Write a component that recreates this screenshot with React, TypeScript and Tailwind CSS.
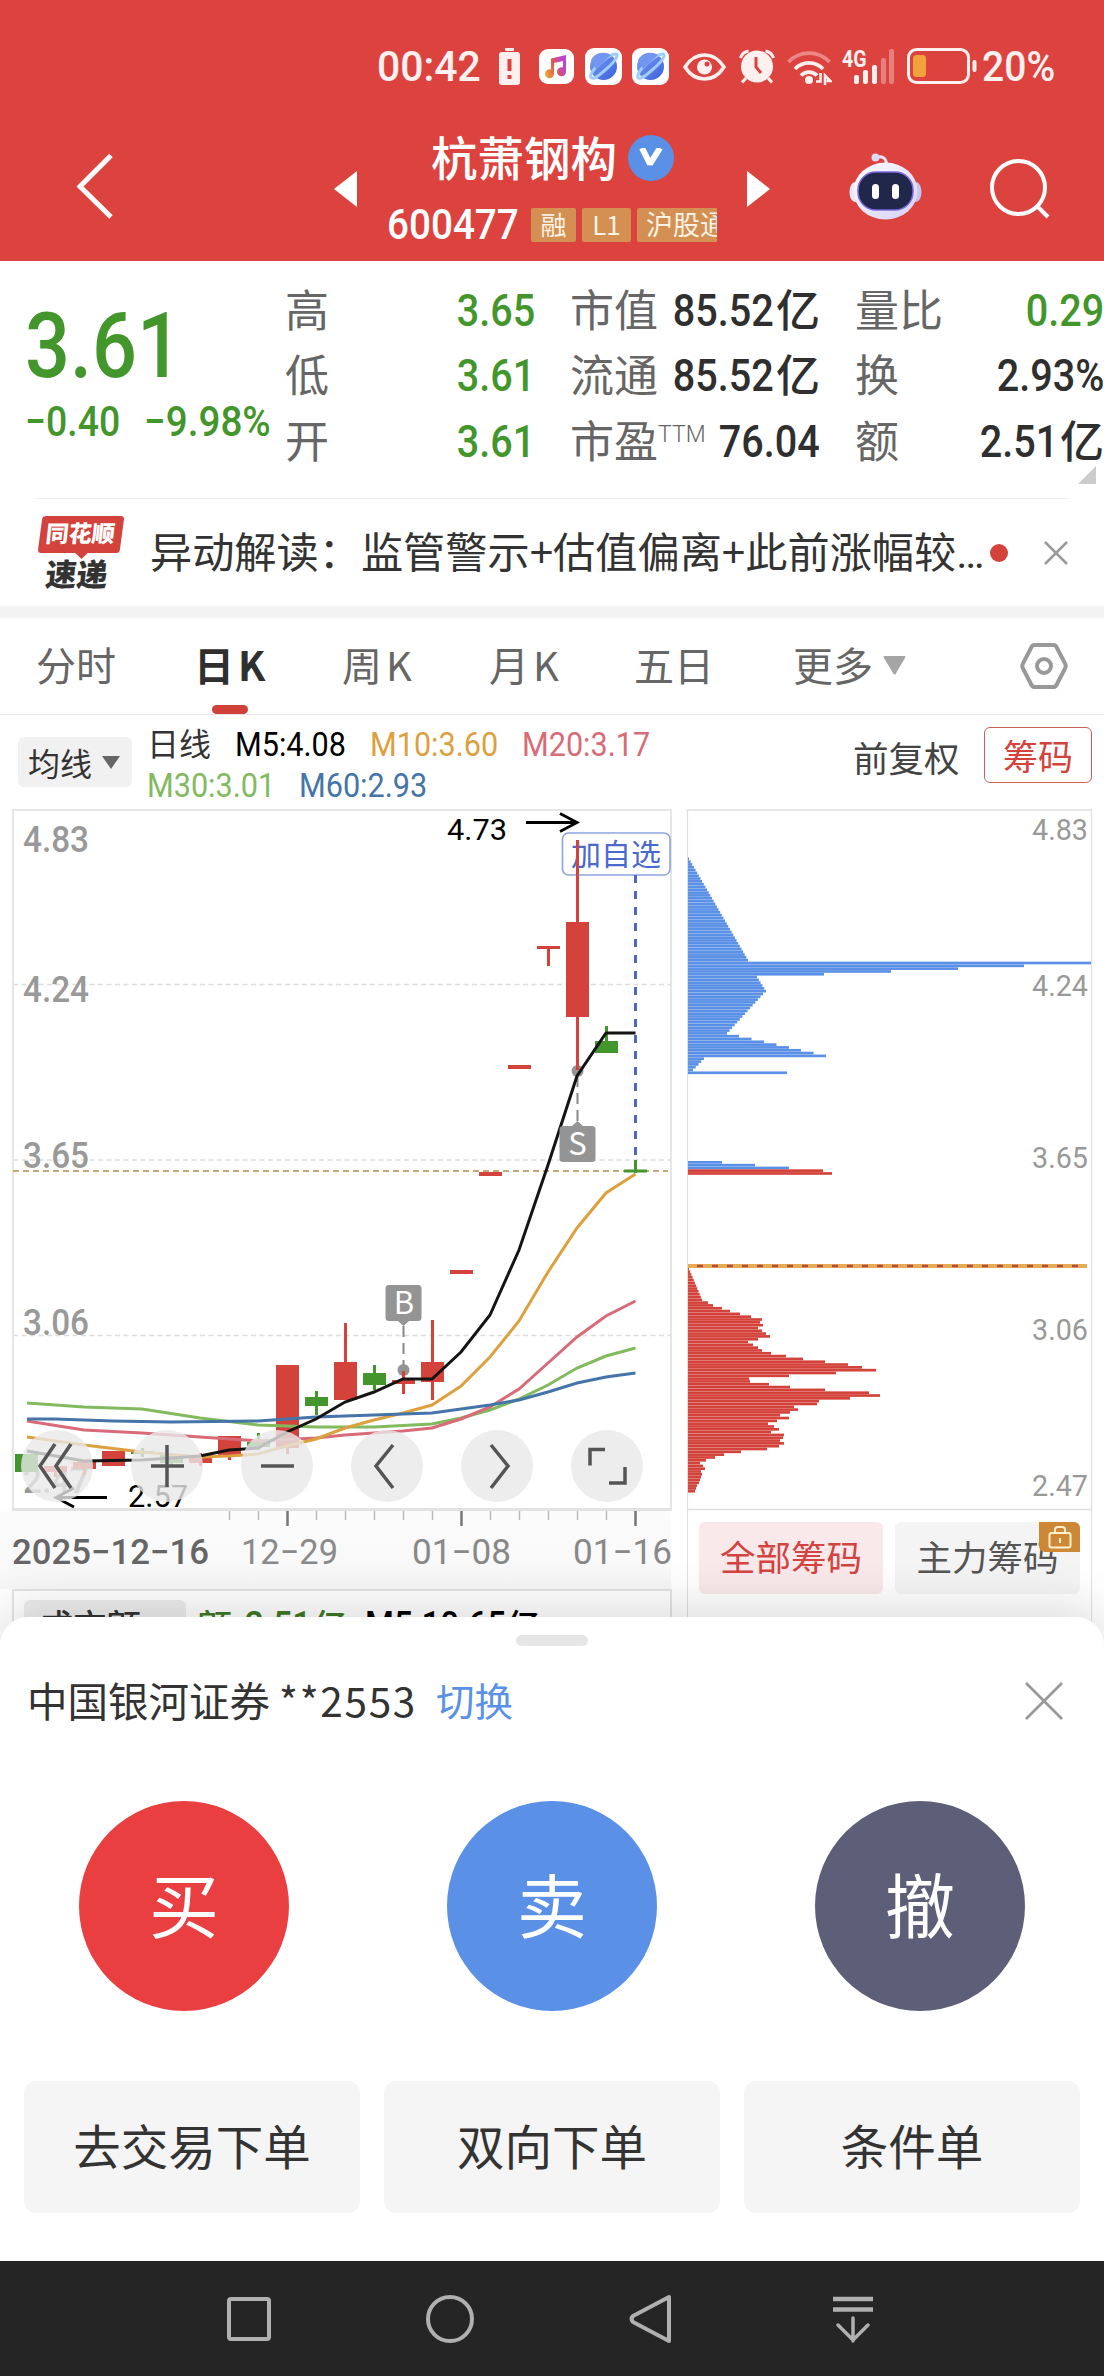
import type { ReactNode } from 'react';

type Candle = { x: number; high: number; low: number; top: number; bottom: number; up: boolean };

const RED = '#d4433b';
const GREEN = '#43962b';
const BLUE = '#5a90e6';

const candles: Candle[] = [
  { x: 26.5, high: 1454, low: 1472, top: 1454, bottom: 1472, up: false },
  { x: 55.5, high: 1466, low: 1477, top: 1466, bottom: 1472, up: true },
  { x: 84.5, high: 1461, low: 1475, top: 1462, bottom: 1469, up: true },
  { x: 113.5, high: 1451, low: 1466, top: 1451, bottom: 1466, up: true },
  { x: 142.5, high: 1448, low: 1457, top: 1451, bottom: 1454, up: false },
  { x: 171.5, high: 1453, low: 1466, top: 1455, bottom: 1463, up: false },
  { x: 200.5, high: 1453, low: 1466, top: 1455, bottom: 1463, up: true },
  { x: 229.5, high: 1436, low: 1460, top: 1436, bottom: 1455, up: true },
  { x: 258.5, high: 1433, low: 1450, top: 1442, bottom: 1447, up: false },
  { x: 287.5, high: 1365, low: 1454, top: 1365, bottom: 1448, up: true },
  { x: 316.5, high: 1391, low: 1415, top: 1397, bottom: 1406, up: false },
  { x: 345.5, high: 1323, low: 1400, top: 1362, bottom: 1400, up: true },
  { x: 374.5, high: 1365, low: 1390, top: 1373, bottom: 1385, up: false },
  { x: 403.5, high: 1371, low: 1394, top: 1380, bottom: 1384, up: true },
  { x: 432.5, high: 1320, low: 1400, top: 1362, bottom: 1382, up: true },
  { x: 461.5, high: 1270, low: 1274, top: 1270, bottom: 1274, up: true },
  { x: 490.5, high: 1172, low: 1176, top: 1172, bottom: 1176, up: true },
  { x: 519.5, high: 1065, low: 1069, top: 1065, bottom: 1069, up: true },
  { x: 548.5, high: 946, low: 966, top: 946, bottom: 949, up: true },
  { x: 577.5, high: 840, low: 1070, top: 922, bottom: 1017, up: true },
  { x: 606.5, high: 1026, low: 1053, top: 1041, bottom: 1053, up: false },
  { x: 635.5, high: 1160, low: 1173, top: 1169.5, bottom: 1172.5, up: false }
];

const averages = [
  {
    color: '#82ba5e',
    points:
      '27,1403 84,1407 142,1409 200,1418 258,1425 316,1427 374,1427 432,1424 461,1418 490,1410 519,1399 548,1385 577,1368 606,1356 635.5,1348'
  },
  {
    color: '#d96b78',
    points:
      '27,1421 84,1430 142,1433 200,1437 258,1441 316,1438 345,1435 374,1433 403,1431 432,1428 461,1419 490,1407 519,1389 548,1363 577,1337 606,1316 635.5,1301'
  },
  {
    color: '#dda03f',
    points:
      '27,1437 84,1445 142,1452 200,1457 229,1456 258,1454 287,1446 316,1439 345,1428 374,1420 403,1413 432,1405 461,1386 490,1357 519,1321 548,1272 577,1228 606,1193 635.5,1174'
  },
  {
    color: '#4474a8',
    points:
      '27,1419 55,1419 113,1421 171,1422 258,1421 287,1419 316,1417 345,1416 374,1415 432,1413 461,1409 490,1405 519,1400 548,1392 577,1383 606,1377 635.5,1373'
  },
  {
    color: '#141414',
    points:
      '27,1451 84,1461 142,1460 200,1456 229,1450 258,1448 287,1432 316,1419 345,1402 374,1392 403,1379 432,1379 461,1352 490,1315 519,1250 548,1165 577,1076 606,1033 635.5,1033'
  }
];

const PITCH = 2.815;

// evenly spaced widths between two values
function ramp(from: number, to: number, count: number) {
  return Array.from({ length: count }, (_, i) => from + ((to - from) * i) / (count - 1));
}

const upperChips = [
  ...ramp(1, 60, 37),
  403, 336, 270, 203, 136,
  ...ramp(69, 78, 6),
  ...ramp(75, 39, 15),
  51, 63.5, 76, 88.5, 101, 113, 125.5, 138,
  ...ramp(16, 5, 5),
  99
];

const lowerChips = [
  ...ramp(1, 14, 12),
  20, 25, 34, 42, 52, 63, 74, 72, 75, 70, 74, 78, 82, 70, 60, 65, 70, 74, 83, 98, 115, 137, 160, 174, 188, 148,
  101, 61, 62, 81, 102, 137, 181, 192, 162, 131, 129, 106, 110, 102, 92, 101, 89, 80, 86, 91, 83, 96, 95, 92,
  96, 91, 79, 53, 36, 27, 18, 12, 15, 17, 13, 14, 13, 12, 11, 9, 8, 7
];

function Chips({ widths, top, color }: { widths: number[]; top: number; color: string }) {
  return (
    <g fill={color}>
      {widths.map((w, i) => (
        <rect key={i} x={688} y={top + i * PITCH} width={w} height={2.68} />
      ))}
    </g>
  );
}

// the digits are narrower than the font draws them
function Num({ className = '', children }: { className?: string; children: ReactNode }) {
  return (
    <span className={`inline-block whitespace-nowrap font-medium font-[Roboto,sans-serif] ${className}`}>
      {children}
    </span>
  );
}

function Planet({ id }: { id: string }) {
  return (
    <svg className="h-[37px] w-[37px]" viewBox="0 0 37 37">
      <defs>
        <linearGradient id={id} x1="0" y1="0" x2="1" y2="1">
          <stop offset="0" stopColor="#7fa0f2" />
          <stop offset="1" stopColor="#3a5fdd" />
        </linearGradient>
      </defs>
      <rect width="37" height="37" rx="9" fill="#fff" />
      <circle cx="18.500" cy="18.500" r="13.500" fill={`url(#${id})`} />
      <path d="M7 30C3 29 8 21 17 13.500S33 4 32 8c-.7 4-7 10-13 15S10 31 7 30Z" fill="none" stroke="#9fcdfa" strokeWidth="3" />
      <path d="M6 12A14 14 0 0 1 26 7L11 21Z" fill="#7397ef" />
    </svg>
  );
}

function StatusBar() {
  return (
    <div className="relative flex h-[132px] items-start pt-[46px] text-[#fdf0ef]">
      <Num className="ml-[377px] w-[120px] origin-left scale-x-[.975] text-[42px] leading-[42px]">00:42</Num>
      <svg className="ml-[2px] mt-0.5 h-[37px] w-[21px]" viewBox="0 0 21 37">
        <rect x="6" y="0" width="9" height="3" rx="1" fill="currentColor" />
        <rect y="4" width="21" height="33" rx="3" fill="currentColor" />
        <path d="M10.500 11v12M10.500 27v4" stroke="#dc433f" strokeWidth="4" />
      </svg>
      <svg className="ml-[19px] mt-[3px] h-[35px] w-[35px]" viewBox="0 0 35 35">
        <defs>
          <linearGradient id="note" x1="0" y1="1" x2="1" y2=".6">
            <stop offset="0" stopColor="#f0b435" />
            <stop offset=".55" stopColor="#e2574c" />
            <stop offset="1" stopColor="#b646d8" />
          </linearGradient>
        </defs>
        <rect width="35" height="35" rx="9" fill="#fff" />
        <path d="M12 9.500 27 6v16.500a4.500 4.500 0 1 1-3-4V12l-9 2v11a4.500 4.500 0 1 1-3-4.500Z" fill="url(#note)" />
      </svg>
      <div className="ml-[11px] mt-0.5 flex gap-2.5">
        <Planet id="planet-a" />
        <Planet id="planet-b" />
      </div>
      <svg className="ml-[14px] mt-[7px] h-[28px] w-[43px]" viewBox="0 0 43 28" fill="none" stroke="currentColor">
        <path d="M2 14C7 6 13 2 21.500 2S36 6 41 14C36 22 30 26 21.500 26S7 22 2 14Z" strokeWidth="3.500" />
        <circle cx="21.500" cy="14" r="7.500" fill="currentColor" stroke="none" />
        <circle cx="24" cy="11" r="2.500" fill="#dc433f" stroke="none" />
      </svg>
      <svg className="ml-[13px] mt-[3px] h-[35px] w-[36px]" viewBox="0 0 36 35" fill="none" stroke="currentColor" strokeWidth="3">
        <circle cx="18" cy="17.500" r="16" fill="currentColor" stroke="none" />
        <path d="M1.500 9a10 10 0 0 1 8-7M34.500 9a10 10 0 0 0-8-7M7 29l-4 4.500M29 29l4 4.500" />
        <path d="M17 8v10l5 6" stroke="#dc433f" strokeWidth="3" />
      </svg>
      <svg className="ml-[12px] mt-[3px] h-[36px] w-[45px]" viewBox="0 0 45 36" fill="none" stroke="currentColor" strokeWidth="3.800">
        <path d="M1.500 13a28 28 0 0 1 41 0" opacity=".4" />
        <path d="M8 20a19 19 0 0 1 28 0" />
        <path d="M14 26.500a11 11 0 0 1 16 0" />
        <circle cx="22" cy="31" r="4" fill="currentColor" stroke="none" />
        <path d="M29 32.500h4.500V24M38 36v-9.500l5.500 5.500h-4" strokeWidth="2.500" />
      </svg>
      <div className="relative ml-[10px] h-[40px] w-[54px]">
        <Num className="absolute left-0 top-0.5 origin-left scale-x-[.85] text-[23px] font-bold! leading-6">4G</Num>
        <svg className="absolute left-[12px] top-[3px] h-[35px] w-[41px]" viewBox="0 0 41 35" fill="currentColor">
          <rect x="0" y="26" width="5" height="9" rx="2" />
          <rect x="9" y="21" width="5" height="14" rx="2" />
          <rect x="18" y="16" width="5" height="19" rx="2" />
          <rect x="27" y="9" width="5" height="26" rx="2" opacity=".35" />
          <rect x="35" y="0" width="5" height="35" rx="2" opacity=".35" />
        </svg>
      </div>
      <svg className="ml-[11px] mt-0.5 h-[36px] w-[71px]" viewBox="0 0 71 36">
        <rect x="1.500" y="1.500" width="60" height="33" rx="8" fill="none" stroke="currentColor" strokeWidth="3" />
        <rect x="6" y="7" width="13" height="22" rx="3.500" fill="#f2a23a" />
        <rect x="65.500" y="12" width="4" height="12" rx="2" fill="currentColor" />
      </svg>
      <Num className="ml-1 origin-left scale-x-[.93] text-[42px] leading-[42px]">20%</Num>
    </div>
  );
}

function Robot() {
  return (
    <svg className="mt-[21px] h-[67px] w-[73px]" viewBox="0 0 73 67">
      <defs>
        <linearGradient id="shell" x1="0" y1="0" x2="1" y2="1">
          <stop offset="0" stopColor="#fff" />
          <stop offset="1" stopColor="#d3d0f4" />
        </linearGradient>
      </defs>
      <path d="M27 4c7-1 10 1 10.500 7" fill="none" stroke="#e6e4fa" strokeWidth="3" />
      <circle cx="26.500" cy="4.500" r="4" fill="#dcdaf5" />
      <ellipse cx="6" cy="39" rx="5.500" ry="10" fill="#e9e7fa" />
      <ellipse cx="67" cy="39" rx="5.500" ry="10" fill="#c7c5ef" />
      <ellipse cx="36.500" cy="38" rx="32" ry="28.500" fill="url(#shell)" />
      <rect x="9" y="19" width="55" height="38" rx="18" fill="#20274a" stroke="#7c68e0" strokeWidth="1.500" />
      <rect x="23" y="31" width="7" height="15" rx="3.500" fill="#fff" />
      <rect x="43" y="31" width="7" height="15" rx="3.500" fill="#fff" />
    </svg>
  );
}

function Header() {
  return (
    <header className="h-[261px] bg-[#dc433f] text-white">
      <StatusBar />
      <div className="flex items-start">
        <svg className="ml-[74px] mt-[20px] h-[68px] w-[40px]" viewBox="0 0 40 68" fill="none" stroke="#fff" strokeWidth="5">
          <path d="M37 3.500 6 34.500 37 65" />
        </svg>
        <svg className="ml-[220px] mt-[39px] h-[36px] w-[23px]" viewBox="0 0 23 36">
          <path d="M23 0v36L0 18Z" fill="#fff" />
        </svg>
        <div className="ml-[30px] w-[330px]">
          <div className="flex h-[52px] items-center pl-[44px]">
            <h1 className="-mt-1 text-[46.500px] font-medium leading-[60px]">杭萧钢构</h1>
            <span className="ml-[11px] flex h-[46px] w-[46px] items-center justify-center rounded-full bg-[#5a90e6]">
              <svg className="h-[20px] w-[24px]" viewBox="0 0 24 20" fill="none" stroke="#fff" strokeWidth="6">
                <path d="m3 0 8 16L21 0" strokeLinejoin="bevel" />
              </svg>
            </span>
          </div>
          <div className="mt-[16px] flex h-[50px] w-[330px] items-center gap-1.5 overflow-hidden text-[26px] leading-[32px] text-[#fdf3e4]">
            <Num className="w-[138px] origin-left scale-x-[.92] text-[42px] leading-[50px] text-white">600477</Num>
            <span className="h-[34px] w-[45px] shrink-0 rounded-xs bg-[#d48f52] text-center">融</span>
            <span className="h-[34px] w-[49px] shrink-0 rounded-xs bg-[#d48f52] text-center">L1</span>
            <span className="h-[34px] w-[96px] shrink-0 rounded-xs bg-[#d48f52] pl-[9px] text-[27px]">沪股通</span>
          </div>
        </div>
        <svg className="ml-[30px] mt-[39px] h-[36px] w-[23px]" viewBox="0 0 23 36">
          <path d="M0 0v36l23-18Z" fill="#fff" />
        </svg>
        <div className="ml-[79px]">
          <Robot />
        </div>
        <svg className="ml-[67px] mt-[26px] h-[62px] w-[62px]" viewBox="0 0 62 62" fill="none" stroke="#fff" strokeWidth="4">
          <circle cx="29.500" cy="29.500" r="26.500" />
          <path d="m48 48 11 11" />
        </svg>
      </div>
    </header>
  );
}

function Stat({ label, value, unit, sup, green }: { label: string; value: string; unit?: string; sup?: string; green?: boolean }) {
  return (
    <div className={`flex h-[65.5px] items-center justify-between leading-none ${green ? 'text-[#43962b]' : 'text-[#2f2f2f]'}`}>
      <span className="-mt-1.5 flex whitespace-nowrap text-[44px] text-[#666]">
        {label}
        {sup && <span className="mt-1.5 w-0 font-[Roboto] text-[23px] font-light">{sup}</span>}
      </span>
      <span className="-mt-px flex items-center">
        <Num className="origin-right scale-x-[.88] text-[45px]">{value}</Num>
        {unit && <span className="-mt-[5px] ml-[2px] text-[44px] font-medium">{unit}</span>}
      </span>
    </div>
  );
}

function Quote() {
  return (
    <section className="relative flex h-[237px] text-[#43962b]">
      <div className="w-[285px] shrink-0 pl-[25px] pt-[39px]">
        <Num className="block! origin-left scale-x-[.87] text-[91px] leading-[92px]">3.61</Num>
        <div className="mt-[9px] flex text-[42px] leading-[42px]">
          <Num className="w-[119px] origin-left scale-x-[.89]">−0.40</Num>
          <Num className="w-[140px] origin-left scale-x-[.92]">−9.98%</Num>
        </div>
      </div>
      <div className="w-[250px] shrink-0 pt-[17px]">
        <Stat label="高" value="3.65" green />
        <Stat label="低" value="3.61" green />
        <Stat label="开" value="3.61" green />
      </div>
      <div className="ml-[35px] w-[250px] shrink-0 pt-[17px]">
        <Stat label="市值" value="85.52" unit="亿" />
        <Stat label="流通" value="85.52" unit="亿" />
        <Stat label="市盈" sup="TTM" value="76.04" />
      </div>
      <div className="ml-[35px] w-[249px] shrink-0 pt-[17px]">
        <Stat label="量比" value="0.29" green />
        <Stat label="换" value="2.93%" />
        <Stat label="额" value="2.51" unit="亿" />
      </div>
      <svg className="absolute bottom-[14px] right-2 h-[18px] w-[18px]" viewBox="0 0 18 18">
        <path d="M18 0v18H0Z" fill="#ccc" />
      </svg>
    </section>
  );
}

function News() {
  return (
    <section className="mx-9 flex h-[108px] items-center border-t border-[#ededed]">
      <div className="relative h-[74px] w-[86px] shrink-0 font-black leading-none">
        <svg className="absolute left-0.5 top-0 h-[44px] w-[86px]" viewBox="0 0 83 44" preserveAspectRatio="none">
          <path d="M8 0h72q3 0 3 3l-4 31q-.5 3-3 3H48l-6 6-6-6H3q-3 0-3-3L4 3Q4.500 0 8 0Z" fill="#d4433b" />
        </svg>
        <span className="absolute left-[10px] top-[5px] -skew-x-6 whitespace-nowrap text-[23px] text-white">同花顺</span>
        <span className="absolute left-[10px] top-[41px] -skew-x-6 whitespace-nowrap text-[31px] text-[#333]">速递</span>
      </div>
      <p className="-mt-0.5 ml-[28px] w-[838px] overflow-hidden whitespace-nowrap text-[42.200px] text-[#333]">
        异动解读：监管警示+估值偏离+此前涨幅较<span className="font-[Roboto]">…</span>
      </p>
      <span className="ml-[2px] h-[18px] w-[18px] shrink-0 rounded-full bg-[#d4433b]" />
      <svg className="ml-auto h-6 w-6 shrink-0" viewBox="0 0 24 24" stroke="#999" strokeWidth="2.500">
        <path d="m1 1 22 22M23 1 1 23" />
      </svg>
    </section>
  );
}

function Tabs() {
  return (
    <nav className="flex h-[97px] items-center border-b border-[#e5e5e5] pb-1 text-[40px] text-[#666]">
      <span className="ml-9 w-[158px]">分时</span>
      <span className="relative flex h-full w-[148px] items-center font-bold text-[#2f2f2f]">
        日<span className="ml-1">K</span>
        <i className="absolute -bottom-1 left-[18px] h-[9px] w-[36px] rounded-full bg-[#d0413a]" />
      </span>
      <span className="w-[147px]">周<span className="ml-1">K</span></span>
      <span className="w-[145px]">月<span className="ml-1">K</span></span>
      <span className="w-[159px]">五日</span>
      <span className="flex w-[227px] items-center gap-2.5">
        更多
        <svg className="mt-0.5 h-[19px] w-[23px]" viewBox="0 0 23 19">
          <path d="M1 0h21q1 0 0 2L12.500 18q-1 1-2 0L1 2Q0 0 1 0Z" fill="#a5a5a5" />
        </svg>
      </span>
      <svg className="mt-1 h-[46px] w-[48px]" viewBox="0 0 48 46" fill="none" stroke="#999" strokeWidth="4">
        <path d="M14.500 2h19q2 0 3 2L45 20.500q1.500 2.500 0 5L36.500 42q-1 2-3 2h-19q-2 0-3-2L3 25.500q-1.500-2.500 0-5L11.500 4q1-2 3-2Z" />
        <circle cx="24" cy="23" r="7" />
      </svg>
    </nav>
  );
}

function Indicators() {
  return (
    <div className="flex h-[94px] items-start">
      <button className="ml-[18px] mt-[22px] flex h-[50px] w-[114px] items-center rounded-md bg-[#f1f1f1] pl-[10px] text-[32px] text-[#333]">
        均线
        <svg className="ml-[10px] h-[13px] w-[18px]" viewBox="0 0 18 13">
          <path d="M0 0h18L9 13Z" fill="#666" />
        </svg>
      </button>
      <div className="ml-[15px] w-[706px] pt-[9px] text-[34px] leading-[41px]">
        <div className="flex h-[41px]">
          <span className="-mt-0.5 w-[88px] text-[32px] text-[#333]">日线</span>
          <Num className="w-[135px] origin-left scale-x-[.9] font-normal! text-black">M5:4.08</Num>
          <Num className="w-[152px] origin-left scale-x-[.9] font-normal! text-[#dda03f]">M10:3.60</Num>
          <Num className="origin-left scale-x-[.9] font-normal! text-[#d96b78]">M20:3.17</Num>
        </div>
        <div className="flex h-[41px]">
          <Num className="w-[152px] origin-left scale-x-[.9] font-normal! text-[#82ba5e]">M30:3.01</Num>
          <Num className="origin-left scale-x-[.9] font-normal! text-[#4474a8]">M60:2.93</Num>
        </div>
      </div>
      <span className="mt-[15px] text-[35.500px] leading-[54px] text-[#444]">前复权</span>
      <button className="ml-auto mr-3 mt-[12px] h-[56px] w-[108px] rounded-md border-[1.5px] border-[#cf5d59] text-[35px] leading-[50px] text-[#d4433b]">
        筹码
      </button>
    </div>
  );
}

function Digits({ x, y, size, width, fill, weight = 400, children }: { x: number; y: number; size: number; width: number; fill: string; weight?: number; children: string }) {
  return (
    <text x={x} y={y} fontSize={size} textLength={width} lengthAdjust="spacingAndGlyphs" fill={fill} fontWeight={weight} fontFamily="Roboto, sans-serif">
      {children}
    </text>
  );
}

const controls = [
  'M34 14 19 36l15 22M50 14 35 36l15 22',
  'M36 15v42M20 36h33',
  'M20 36h33',
  'M42 15 25 36l17 22',
  'M30 15l17 21-17 22',
  'M34 19.500H19v16M38 53h16V37'
];

function KLine() {
  return (
    <div className="relative h-[780px] w-[680px]">
      <svg className="block h-[780px] w-[680px]" viewBox="0 809 680 780">
        <defs>
          <linearGradient id="fade" x1="0" y1="0" x2="0" y2="1">
            <stop offset="0" stopColor="#fcfcfc" />
            <stop offset="1" stopColor="#f7f7f7" />
          </linearGradient>
        </defs>
        <rect x="0" y="1511" width="671" height="78" fill="url(#fade)" />
        <g stroke="#ddd" strokeWidth="1.500" strokeDasharray="5 3.500">
          <path d="M13 984.500H670M13 1160H670M13 1335.500H670" />
        </g>
        <path d="M13 1510V810H671V1510" fill="none" stroke="#e6e6e6" strokeWidth="2" />
        <path d="M12 1509.500H672" stroke="#e2e2e2" strokeWidth="3" />
        <path d="M13 1171H668" stroke="#c4a878" strokeWidth="1.800" strokeDasharray="6 4" />

        <Digits x={23} y={852} size={36} width={66} fill="#999" weight={500}>4.83</Digits>
        <Digits x={23} y={1002} size={36} width={66} fill="#999" weight={500}>4.24</Digits>
        <Digits x={23} y={1168} size={36} width={66} fill="#999" weight={500}>3.65</Digits>
        <Digits x={23} y={1335} size={36} width={66} fill="#999" weight={500}>3.06</Digits>
        <Digits x={23} y={1493} size={36} width={66} fill="#999" weight={500}>2.47</Digits>

        <rect x="562.500" y="833" width="107.500" height="42" rx="6" fill="#fff" stroke="#8da5df" strokeWidth="1.600" />
        <text x="571" y="865" fontSize="30" fill="#4a68d0" fontFamily="Noto Sans CJK SC, sans-serif">加自选</text>
        <path d="M635.500 875V1160" stroke="#4a68c4" strokeWidth="3" strokeDasharray="8 8" />

        <g stroke="#888" strokeWidth="2" strokeDasharray="11 6">
          <path d="M403.500 1326V1365M577.500 1076V1122" />
        </g>
        <circle cx="403.500" cy="1370" r="6" fill="#949494" />
        <circle cx="577.500" cy="1071" r="6" fill="#949494" />

        {candles.map((c) => (
          <g key={c.x} fill={c.up ? RED : GREEN}>
            <rect x={c.x - 1.5} y={c.high} width={3} height={c.low - c.high} />
            <rect x={c.x - 11.5} y={c.top} width={23} height={c.bottom - c.top} />
          </g>
        ))}
        {averages.map((line) => (
          <polyline key={line.color} points={line.points} fill="none" stroke={line.color} strokeWidth="3" />
        ))}

        <path d="M389 1285h29q3.500 0 3.500 3.500v29q0 3.500-3.500 3.500h-9l-5.500 5-5.500-5h-9q-3.500 0-3.500-3.500v-29q0-3.500 3.500-3.500Z" fill="#949494" />
        <path d="M563 1126h9l5.500-5 5.500 5h9q3.500 0 3.500 3.500v29q0 3.500-3.500 3.500h-29q-3.500 0-3.500-3.500v-29q0-3.500 3.500-3.500Z" fill="#949494" />
        <g fontSize="31" fill="#fff" textAnchor="middle" fontFamily="Noto Sans CJK SC, sans-serif">
          <text x="404" y="1314">B</text>
          <text x="577.500" y="1155">S</text>
        </g>

        <Digits x={447} y={840} size={30} width={60} fill="#000">4.73</Digits>
        <path d="M526 822.500H577M560 813.500l17 9-17 9" fill="none" stroke="#000" strokeWidth="2.800" />
        <Digits x={128} y={1507} size={32} width={60} fill="#000">2.57</Digits>
        <path d="M107 1497.500H56M74 1488l-18 9.500 18 9.500" fill="none" stroke="#000" strokeWidth="2.800" />

        <g stroke="#bbb" strokeWidth="1.500">
          {[229.5, 258.5, 316.5, 345.5, 374.5, 403.5, 432.5, 490.5, 519.5, 548.5, 577.5, 606.5].map((x) => (
            <path key={x} d={`M${x} 1511v9`} />
          ))}
        </g>
        <path d="M287.500 1511v15M461.500 1511v15M635.500 1511v15" stroke="#777" strokeWidth="2.500" />
        <Digits x={12} y={1564} size={35} width={197} fill="#666" weight={500}>2025−12−16</Digits>
        <Digits x={241} y={1564} size={35} width={97} fill="#8a8a8a">12−29</Digits>
        <Digits x={412} y={1564} size={35} width={99} fill="#888">01−08</Digits>
        <Digits x={573} y={1564} size={35} width={99} fill="#888">01−16</Digits>
      </svg>
      <div className="absolute left-[21px] top-[621px] flex gap-[38px]">
        {controls.map((d) => (
          <button key={d} className="h-[72px] w-[72px] rounded-full bg-[#e8e8e8]/80">
            <svg className="h-full w-full" viewBox="0 0 72 72" fill="none" stroke="#555" strokeWidth="3.500">
              <path d={d} />
            </svg>
          </button>
        ))}
      </div>
    </div>
  );
}

function ChipPanel() {
  return (
    <div className="h-[832px] w-[424px]">
      <svg className="block h-[702px] w-[424px]" viewBox="680 809 424 702">
        <path d="M687.500 1511V810H1091.500V1511M688 1509.500H1091" fill="none" stroke="#e0e0e0" strokeWidth="1.300" />
        <Chips widths={upperChips} top={857.5} color={BLUE} />
        <Chips widths={[34, 67, 101]} top={1161} color={BLUE} />
        <Chips widths={[135, 144]} top={1169.3} color={RED} />
        <Chips widths={lowerChips} top={1267.5} color={RED} />
        <path d="M688 1266H1087" stroke="#e6ab55" strokeWidth="4" />
        <path d="M697 1266H1080" stroke="#b84a44" strokeWidth="2.600" strokeDasharray="6 9" />
        <Digits x={1032} y={840} size={30} width={56} fill="#999">4.83</Digits>
        <Digits x={1032} y={996} size={30} width={56} fill="#999">4.24</Digits>
        <Digits x={1032} y={1168} size={30} width={56} fill="#999">3.65</Digits>
        <Digits x={1032} y={1340} size={30} width={56} fill="#999">3.06</Digits>
        <Digits x={1032} y={1496} size={30} width={56} fill="#999">2.47</Digits>
      </svg>
      <div className="ml-[7px] flex h-[130px] w-[405px] gap-3 border-x border-[#e0e0e0] pl-[11px] pt-[11px] text-[35.500px] leading-[68px]">
        <button className="h-[72px] w-[184px] rounded-md bg-[#f9e9ea] pb-1 text-[#d4433f]">全部筹码</button>
        <button className="relative h-[72px] w-[185px] rounded-md bg-[#f4f4f4] pb-1 text-[#555]">
          主力筹码
          <span className="absolute right-0 top-0 flex h-[30px] w-[41px] items-center justify-center rounded-bl-md rounded-tr-md bg-[#cc8834]">
            <svg className="h-[24px] w-[24px]" viewBox="0 0 24 24" fill="none" stroke="#fff0d0" strokeWidth="2">
              <rect x="1.500" y="8" width="21" height="14.500" rx="2" />
              <path d="M7 8V4.500Q7 2 10 2h4q3 0 3 2.500V8M12 13v5" />
            </svg>
          </span>
        </button>
      </div>
    </div>
  );
}

function Chart() {
  return (
    <section className="flex h-[832px]">
      <div className="w-[680px]">
        <KLine />
        <div className="ml-[12px] h-[52px] w-[660px] border-2 border-b-0 border-[#e4e4e4] bg-white">
          <div className="flex pl-[10px] pt-[9px] text-[34px] font-medium leading-[50px]">
            <span className="h-[50px] w-[162px] rounded-md bg-[#ededed] pl-[15px] text-[#333]">成交额</span>
            <span className="ml-[12px] flex w-[167px] text-[#3f7a26]">
              额<Num className="ml-1 origin-left scale-x-[.93] text-[36px]">:2.51</Num><span className="-ml-1">亿</span>
            </span>
            <span className="flex text-black">
              <Num className="origin-left scale-x-[.92] text-[36px]">M5:10.65</Num><span className="-ml-3">亿</span>
            </span>
          </div>
        </div>
      </div>
      <ChipPanel />
    </section>
  );
}

function TradeSheet() {
  const actions = [
    { label: '买', color: 'bg-[#ea3f41]' },
    { label: '卖', color: 'bg-[#5a90e6]' },
    { label: '撤', color: 'bg-[#5d5f78]' }
  ];
  return (
    <section className="relative -mt-6 h-[644px] rounded-t-[28px] bg-white pt-[18px] shadow-[0_-10px_50px_rgba(0,0,0,0.14)]">
      <div className="mx-auto h-[11px] w-[72px] rounded-full bg-[#e6e6e6]" />
      <div className="ml-[27px] mr-[41px] mt-[24px] flex h-[60px] items-center whitespace-pre text-[40.500px] text-[#333]">
        中国银河证券 <span className="tracking-[1.7px]">**2553</span>
        <span className="ml-[19px] text-[38.500px] text-[#5a90e6]">切换</span>
        <svg className="ml-auto mt-0.5 h-[38px] w-[38px]" viewBox="0 0 38 38" stroke="#999" strokeWidth="2.800">
          <path d="m1 1 36 36M37 1 1 37" />
        </svg>
      </div>
      <div className="mt-[71px] grid grid-cols-3 justify-items-center">
        {actions.map((a) => (
          <button key={a.label} className={`h-[210px] w-[210px] rounded-full pb-2 text-[70px] text-white ${a.color}`}>
            {a.label}
          </button>
        ))}
      </div>
      <div className="mx-6 mt-[70px] grid grid-cols-3 gap-6">
        {['去交易下单', '双向下单', '条件单'].map((label) => (
          <button key={label} className="h-[132px] rounded-xl bg-[#f5f5f5] pb-1 text-[47.500px] text-[#333]">
            {label}
          </button>
        ))}
      </div>
    </section>
  );
}

function NavBar() {
  return (
    <footer className="relative flex h-[115px] items-center bg-[#252525] pl-[225px]">
      <svg className="h-[52px] w-[652px]" viewBox="0 0 652 52" fill="none" stroke="#b0b0b0" strokeWidth="4" strokeLinejoin="round">
        <rect x="4" y="6" width="40" height="40" rx="2" />
        <circle cx="225" cy="26" r="22" />
        <path d="M444 4v44L408 29q-3-3 0-6Z" />
        <path d="M608 6h40M608 16.500h40" strokeWidth="4.500" />
        <path d="M628 25v23M613 32l15 15 15-15" strokeWidth="3.500" strokeLinecap="round" />
      </svg>
    </footer>
  );
}

export default function App() {
  return (
    <div className="h-[2376px] w-[1104px] overflow-hidden bg-white font-['Noto_Sans_CJK_SC',sans-serif]">
      <Header />
      <Quote />
      <News />
      <div className="h-3 bg-[#f3f3f3]" />
      <Tabs />
      <Indicators />
      <Chart />
      <TradeSheet />
      <NavBar />
    </div>
  );
}
